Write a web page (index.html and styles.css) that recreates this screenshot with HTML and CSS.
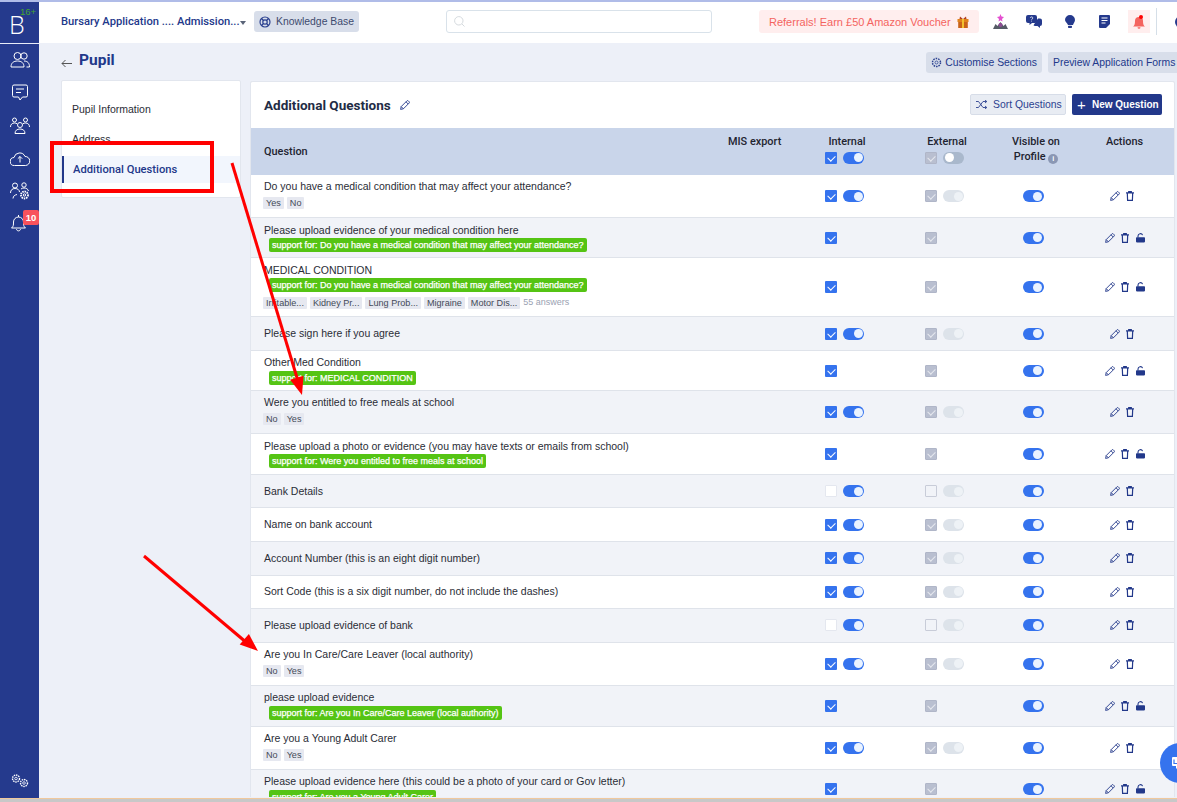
FILE: index.html
```html
<!DOCTYPE html>
<html lang="en">

<head>
    <meta charset="UTF-8">
    <meta name="viewport" content="width=device-width, initial-scale=1.0">
    <title>Additional Questions</title>
    <link rel="stylesheet" href="styles.css">
</head>

<body>
    <!-- shared action icons -->
    <svg class="defs" aria-hidden="true">
        <symbol id="i-pencil" viewBox="0 0 10 10">
            <path d="M.6 9.400l.6-2.800L6.900.9a1 1 0 0 1 1.400 0l.8.8a1 1 0 0 1 0 1.400L3.400 8.800zM1.200 6.600l2.200 2.200M6 1.800l2.200 2.200" fill="none" stroke="currentColor" stroke-width=".9" stroke-linejoin="round" />
        </symbol>
        <symbol id="i-trash" viewBox="0 0 8 10">
            <path d="M0 1.800h8M2.700 1.800V.6h2.600v1.200M1.300 1.800l.3 7.600h4.800l.3-7.600" fill="none" stroke="currentColor" stroke-width="1.200" />
        </symbol>
        <symbol id="i-lock" viewBox="0 0 9 10">
            <path d="M2 4.500V3A2.400 2.400 0 0 1 6.600 2.100" fill="none" stroke="currentColor" stroke-width="1.100" />
            <path d="M.8 4.300h7.400a.8.8 0 0 1 .8.8v3.500a.8.8 0 0 1-.8.8H.8a.8.8 0 0 1-.8-.8V5.100a.8.8 0 0 1 .8-.8z" fill="currentColor" />
        </symbol>
    </svg>

    <div class="app">
        <!-- left rail -->
        <aside class="rail">
            <div class="logo"><span class="logo-b">B</span><span class="logo-age">16+</span></div>
            <nav class="rail-nav">
                <a class="rail-icon">
                    <svg width="20" height="18" viewBox="0 0 20 18" fill="none" stroke="#fff" stroke-width="1">
                        <circle cx="7.500" cy="5" r="3.500" />
                        <circle cx="14" cy="5" r="3.200" />
                        <path d="M1 16c0-4 2.500-6 6.500-6s6.500 2 6.500 6zM14 10c3.500 0 5.500 2 5.500 6h-3" />
                    </svg>
                </a>
                <a class="rail-icon">
                    <svg width="16" height="17" viewBox="0 0 16 17" fill="none" stroke="#fff" stroke-width="1">
                        <path d="M2 1h12a1.500 1.500 0 0 1 1.500 1.500v9A1.500 1.500 0 0 1 14 13h-3.500L8 16l-1.500-3H2A1.500 1.500 0 0 1 .5 11.500v-9A1.500 1.500 0 0 1 2 1z" />
                        <path d="M4 5h8M4 8.500h5" />
                    </svg>
                </a>
                <a class="rail-icon">
                    <svg width="20" height="17" viewBox="0 0 20 17" fill="none" stroke="#fff" stroke-width="1">
                        <circle cx="4.500" cy="3" r="2" />
                        <circle cx="15.500" cy="3" r="2" />
                        <circle cx="10" cy="8" r="2.500" />
                        <path d="M.5 10c0-2.500 1.500-4 4-4 1 0 1.800.2 2.500.8M19.500 10c0-2.500-1.500-4-4-4-1 0-1.800.2-2.500.8M5 16.500c0-3 2-4.500 5-4.500s5 1.500 5 4.500z" />
                    </svg>
                </a>
                <a class="rail-icon">
                    <svg width="20" height="15" viewBox="0 0 20 15" fill="none" stroke="#fff" stroke-width="1">
                        <path d="M5 14.500H4.500A4 4 0 0 1 4 6.500 5.800 5.800 0 0 1 15 5.500a4.500 4.500 0 0 1 .5 9H5z" />
                        <path d="M10 11.500V5.500M7.800 7.700L10 5.500l2.200 2.200" />
                    </svg>
                </a>
                <a class="rail-icon">
                    <svg width="20" height="18" viewBox="0 0 20 18" fill="none" stroke="#fff" stroke-width="1">
                        <circle cx="5" cy="3.500" r="2.500" />
                        <circle cx="14" cy="3" r="2.200" />
                        <path d="M.5 11c0-3 1.800-4.500 4.500-4.500S9.500 8 9.500 10M11 7c.8-.6 1.800-1 3-1 2.200 0 4 1 4.500 3M3 16.500c.3-2.500 1.500-3.500 4-4" />
                        <circle cx="14.500" cy="13" r="3.500" stroke-width="1.800" stroke-dasharray="1.500 .8" />
                        <circle cx="14.500" cy="13" r="1.200" />
                    </svg>
                </a>
                <a class="rail-icon rail-bell">
                    <svg width="15" height="18" viewBox="0 0 15 18" fill="none" stroke="#fff" stroke-width="1">
                        <path d="M.5 14c2-1.500 2-3 2-6a5 5 0 0 1 10 0c0 3 0 4.500 2 6zM5.500 15c.2 2.500 3.800 2.500 4 0M7.500 3V1" />
                    </svg>
                    <span class="rail-badge">10</span>
                </a>
            </nav>
            <a class="rail-gears">
                <svg width="20" height="15" viewBox="0 0 20 15" fill="none" stroke="#fff">
                    <circle cx="6" cy="5.500" r="3.500" stroke-width="1.400" stroke-dasharray="1.500 .8" />
                    <circle cx="6" cy="5.500" r="1.300" stroke-width=".8" />
                    <circle cx="14" cy="10" r="3.500" stroke-width="1.400" stroke-dasharray="1.500 .8" />
                    <circle cx="14" cy="10" r="1.300" stroke-width=".8" />
                </svg>
            </a>
        </aside>

        <div class="page">
            <!-- top bar -->
            <header class="topbar">
                <div class="school"><span>Bursary Application .... Admission...</span><i class="caret"></i></div>
                <a class="kb-btn">
                    <svg width="12" height="12" viewBox="0 0 12 12" fill="none" stroke="#2c4290" stroke-width="1.200">
                        <circle cx="6" cy="6" r="5" />
                        <circle cx="6" cy="6" r="2.200" />
                        <path d="M2.500 2.500l2 2M9.500 2.500l-2 2M2.500 9.500l2-2M9.500 9.500l-2-2" />
                    </svg>
                    Knowledge Base
                </a>
                <div class="search">
                    <svg width="11" height="11" viewBox="0 0 11 11" fill="none" stroke="#d5dade" stroke-width="1">
                        <circle cx="4.800" cy="4.800" r="4.200" />
                        <path d="M8 8l2.500 2.500" />
                    </svg>
                </div>
                <a class="referral">
                    Referrals! Earn £50 Amazon Voucher
                    <svg width="12" height="12" viewBox="0 0 12 12">
                        <rect x=".5" y="3" width="11" height="3" fill="#e0821e" />
                        <rect x="1.200" y="6" width="9.600" height="6" fill="#c9631a" />
                        <rect x="5" y="3" width="2" height="9" fill="#f2c230" />
                        <path d="M6 3L3 .5 2.500 3zM6 3l3-2.500.5 2.500z" fill="#b2401c" />
                    </svg>
                </a>
                <div class="top-icons">
                    <a class="top-icon">
                        <svg width="15" height="15" viewBox="0 0 15 15">
                            <path d="M7.500 0l1 2.500L11 3 9 5l.5 2.500-2-1.200-2 1.200L6 5 4 3l2.500-.5z" fill="#e44fd0" />
                            <path d="M0 15l2.500-5 2 2 3-4 3 4 2-2 2.500 5z" fill="#555b66" />
                            <circle cx="7.500" cy="11" r="2" fill="#8e4d96" />
                        </svg>
                    </a>
                    <a class="top-icon">
                        <svg width="16" height="13" viewBox="0 0 16 13">
                            <path d="M2 0h7a2 2 0 0 1 2 2v4a2 2 0 0 1-2 2H6L3.500 10V8H2a2 2 0 0 1-2-2V2a2 2 0 0 1 2-2z" fill="#253a8d" />
                            <path d="M12 3.500h2a2 2 0 0 1 2 2V9a2 2 0 0 1-2 2v2l-2.500-2H9a2 2 0 0 1-1.500-.8z" fill="#253a8d" />
                            <path d="M4.300 2.800c.3-1.300 2.700-1.100 2.500.3-.1.800-1 .8-1.200 1.600M5.500 5.700v.8" fill="none" stroke="#fff" stroke-width=".8" />
                        </svg>
                    </a>
                    <a class="top-icon">
                        <svg width="10" height="13" viewBox="0 0 10 13">
                            <path d="M5 0a5 5 0 0 1 5 5c0 2-1.500 3-2 5H3C2.500 8 0 7 0 5a5 5 0 0 1 5-5z" fill="#253a8d" />
                            <rect x="3" y="10.800" width="4" height="2.200" rx=".8" fill="#253a8d" />
                        </svg>
                    </a>
                    <a class="top-icon">
                        <svg width="11" height="13" viewBox="0 0 11 13">
                            <path d="M1 0h9a1 1 0 0 1 1 1v8l-4 4H1a1 1 0 0 1-1-1V1a1 1 0 0 1 1-1z" fill="#253a8d" />
                            <path d="M2.500 3h6M2.500 5.500h6M2.500 8h4" stroke="#fff" stroke-width="1.100" />
                        </svg>
                    </a>
                    <a class="top-icon bell-box">
                        <svg width="12" height="14" viewBox="0 0 12 14">
                            <path d="M0 11.500c1.500-1 2-2.500 2-5.500a4 4 0 0 1 8 0c0 3 .5 4.500 2 5.500z" fill="#f4645f" />
                            <path d="M4.500 12.300h3a1.500 1.500 0 0 1-3 0z" fill="#f4645f" />
                            <circle cx="8" cy="2" r="2" fill="#f00" />
                        </svg>
                    </a>
                    <span class="top-sep"></span>
                    <span class="avatar"></span>
                </div>
            </header>

            <main class="content">
                <div class="title-row">
                    <div class="title-left">
                        <svg width="11" height="9" viewBox="0 0 11 9" fill="none" stroke="#555" stroke-width="1">
                            <path d="M11 4.500H1M4.500 1L1 4.500 4.500 8" />
                        </svg>
                        <h1>Pupil</h1>
                    </div>
                    <div class="title-btns">
                        <a class="soft-btn">
                            <svg width="11" height="11" viewBox="0 0 11 11" fill="none" stroke="#2c4290">
                                <circle cx="5.500" cy="5.500" r="4" stroke-width="1.500" stroke-dasharray="1.600 .9" />
                                <circle cx="5.500" cy="5.500" r="1.500" stroke-width=".8" />
                            </svg>
                            Customise Sections
                        </a>
                        <a class="soft-btn preview">Preview Application Forms</a>
                    </div>
                </div>

                <div class="columns">
                    <div class="side-card">
                        <a class="side-link">Pupil Information</a>
                        <a class="side-link">Address</a>
                        <a class="side-link active">Additional Questions</a>
                    </div>

                    <section class="panel">
                        <div class="panel-head">
                            <h2>Additional Questions</h2>
                            <svg class="icon head-pencil"><use href="#i-pencil" /></svg>
                            <a class="sort-btn">
                                <svg width="11" height="9" viewBox="0 0 11 9" fill="none" stroke="#2c4290" stroke-width=".9">
                                    <path d="M0 1.500h2.500l4.500 6h3.500M0 7.500h2.500l4.500-6h3.500M9 0l1.800 1.500L9 3M9 6l1.800 1.500L9 9" />
                                </svg>
                                Sort Questions
                            </a>
                            <a class="new-btn"><span class="plus">+</span>New Question</a>
                        </div>

                        <div class="row head">
                            <div class="q">Question</div>
                            <div class="mis">MIS export</div>
                            <div class="head-col">
                                <span class="head-label">Internal</span>
                                <div class="ctrls"><i class="check"></i><i class="toggle"></i></div>
                            </div>
                            <div class="head-col">
                                <span class="head-label">External</span>
                                <div class="ctrls"><i class="check grey"></i><i class="toggle slate"></i></div>
                            </div>
                            <div class="head-vis">Visible on<br>Profile <i class="info">i</i></div>
                            <div class="head-act">Actions</div>
                        </div>

                        <div class="rows">
                            <div class="row tall">
                                <div class="q">Do you have a medical condition that may affect your attendance?
                                    <div class="tags"><span class="tag">Yes</span><span class="tag">No</span></div>
                                </div>
                                <div></div>
                                <div class="ctrls"><i class="check"></i><i class="toggle"></i></div>
                                <div class="ctrls"><i class="check grey"></i><i class="toggle dim"></i></div>
                                <div class="vis"><i class="toggle"></i></div>
                                <div class="acts plain"><svg class="icon"><use href="#i-pencil" /></svg><svg class="icon trash"><use href="#i-trash" /></svg></div>
                            </div>
                            <div class="row sup">
                                <div class="q">Please upload evidence of your medical condition here
                                    <span class="support">support for: Do you have a medical condition that may affect your attendance?</span>
                                </div>
                                <div></div>
                                <div class="ctrls"><i class="check"></i></div>
                                <div class="ctrls"><i class="check grey"></i></div>
                                <div class="vis"><i class="toggle"></i></div>
                                <div class="acts"><svg class="icon"><use href="#i-pencil" /></svg><svg class="icon trash"><use href="#i-trash" /></svg><svg class="icon lock"><use href="#i-lock" /></svg></div>
                            </div>
                            <div class="row big">
                                <div class="q">MEDICAL CONDITION
                                    <span class="support">support for: Do you have a medical condition that may affect your attendance?</span>
                                    <div class="tags"><span class="tag">Irritable...</span><span class="tag">Kidney Pr...</span><span class="tag">Lung Prob...</span><span class="tag">Migraine</span><span class="tag">Motor Dis...</span><span class="more">55 answers</span></div>
                                </div>
                                <div></div>
                                <div class="ctrls"><i class="check"></i></div>
                                <div class="ctrls"><i class="check grey"></i></div>
                                <div class="vis"><i class="toggle"></i></div>
                                <div class="acts"><svg class="icon"><use href="#i-pencil" /></svg><svg class="icon trash"><use href="#i-trash" /></svg><svg class="icon lock"><use href="#i-lock" /></svg></div>
                            </div>
                            <div class="row">
                                <div class="q">Please sign here if you agree</div>
                                <div></div>
                                <div class="ctrls"><i class="check"></i><i class="toggle"></i></div>
                                <div class="ctrls"><i class="check grey"></i><i class="toggle dim"></i></div>
                                <div class="vis"><i class="toggle"></i></div>
                                <div class="acts plain"><svg class="icon"><use href="#i-pencil" /></svg><svg class="icon trash"><use href="#i-trash" /></svg></div>
                            </div>
                            <div class="row sup">
                                <div class="q">Other Med Condition
                                    <span class="support">support for: MEDICAL CONDITION</span>
                                </div>
                                <div></div>
                                <div class="ctrls"><i class="check"></i></div>
                                <div class="ctrls"><i class="check grey"></i></div>
                                <div class="vis"><i class="toggle"></i></div>
                                <div class="acts"><svg class="icon"><use href="#i-pencil" /></svg><svg class="icon trash"><use href="#i-trash" /></svg><svg class="icon lock"><use href="#i-lock" /></svg></div>
                            </div>
                            <div class="row tall">
                                <div class="q">Were you entitled to free meals at school
                                    <div class="tags"><span class="tag">No</span><span class="tag">Yes</span></div>
                                </div>
                                <div></div>
                                <div class="ctrls"><i class="check"></i><i class="toggle"></i></div>
                                <div class="ctrls"><i class="check grey"></i><i class="toggle dim"></i></div>
                                <div class="vis"><i class="toggle"></i></div>
                                <div class="acts plain"><svg class="icon"><use href="#i-pencil" /></svg><svg class="icon trash"><use href="#i-trash" /></svg></div>
                            </div>
                            <div class="row sup">
                                <div class="q">Please upload a photo or evidence (you may have texts or emails from school)
                                    <span class="support">support for: Were you entitled to free meals at school</span>
                                </div>
                                <div></div>
                                <div class="ctrls"><i class="check"></i></div>
                                <div class="ctrls"><i class="check grey"></i></div>
                                <div class="vis"><i class="toggle"></i></div>
                                <div class="acts"><svg class="icon"><use href="#i-pencil" /></svg><svg class="icon trash"><use href="#i-trash" /></svg><svg class="icon lock"><use href="#i-lock" /></svg></div>
                            </div>
                            <div class="row">
                                <div class="q">Bank Details</div>
                                <div></div>
                                <div class="ctrls"><i class="check blank"></i><i class="toggle"></i></div>
                                <div class="ctrls"><i class="check blank ext"></i><i class="toggle dim"></i></div>
                                <div class="vis"><i class="toggle"></i></div>
                                <div class="acts plain"><svg class="icon"><use href="#i-pencil" /></svg><svg class="icon trash"><use href="#i-trash" /></svg></div>
                            </div>
                            <div class="row">
                                <div class="q">Name on bank account</div>
                                <div></div>
                                <div class="ctrls"><i class="check"></i><i class="toggle"></i></div>
                                <div class="ctrls"><i class="check grey"></i><i class="toggle dim"></i></div>
                                <div class="vis"><i class="toggle"></i></div>
                                <div class="acts plain"><svg class="icon"><use href="#i-pencil" /></svg><svg class="icon trash"><use href="#i-trash" /></svg></div>
                            </div>
                            <div class="row">
                                <div class="q">Account Number (this is an eight digit number)</div>
                                <div></div>
                                <div class="ctrls"><i class="check"></i><i class="toggle"></i></div>
                                <div class="ctrls"><i class="check grey"></i><i class="toggle dim"></i></div>
                                <div class="vis"><i class="toggle"></i></div>
                                <div class="acts plain"><svg class="icon"><use href="#i-pencil" /></svg><svg class="icon trash"><use href="#i-trash" /></svg></div>
                            </div>
                            <div class="row">
                                <div class="q">Sort Code (this is a six digit number, do not include the dashes)</div>
                                <div></div>
                                <div class="ctrls"><i class="check"></i><i class="toggle"></i></div>
                                <div class="ctrls"><i class="check grey"></i><i class="toggle dim"></i></div>
                                <div class="vis"><i class="toggle"></i></div>
                                <div class="acts plain"><svg class="icon"><use href="#i-pencil" /></svg><svg class="icon trash"><use href="#i-trash" /></svg></div>
                            </div>
                            <div class="row">
                                <div class="q">Please upload evidence of bank</div>
                                <div></div>
                                <div class="ctrls"><i class="check blank"></i><i class="toggle"></i></div>
                                <div class="ctrls"><i class="check blank ext"></i><i class="toggle dim"></i></div>
                                <div class="vis"><i class="toggle"></i></div>
                                <div class="acts plain"><svg class="icon"><use href="#i-pencil" /></svg><svg class="icon trash"><use href="#i-trash" /></svg></div>
                            </div>
                            <div class="row tall">
                                <div class="q">Are you In Care/Care Leaver (local authority)
                                    <div class="tags"><span class="tag">No</span><span class="tag">Yes</span></div>
                                </div>
                                <div></div>
                                <div class="ctrls"><i class="check"></i><i class="toggle"></i></div>
                                <div class="ctrls"><i class="check grey"></i><i class="toggle dim"></i></div>
                                <div class="vis"><i class="toggle"></i></div>
                                <div class="acts plain"><svg class="icon"><use href="#i-pencil" /></svg><svg class="icon trash"><use href="#i-trash" /></svg></div>
                            </div>
                            <div class="row sup loose">
                                <div class="q">please upload evidence
                                    <span class="support">support for: Are you In Care/Care Leaver (local authority)</span>
                                </div>
                                <div></div>
                                <div class="ctrls"><i class="check"></i></div>
                                <div class="ctrls"><i class="check grey"></i></div>
                                <div class="vis"><i class="toggle"></i></div>
                                <div class="acts"><svg class="icon"><use href="#i-pencil" /></svg><svg class="icon trash"><use href="#i-trash" /></svg><svg class="icon lock"><use href="#i-lock" /></svg></div>
                            </div>
                            <div class="row tall">
                                <div class="q">Are you a Young Adult Carer
                                    <div class="tags"><span class="tag">No</span><span class="tag">Yes</span></div>
                                </div>
                                <div></div>
                                <div class="ctrls"><i class="check"></i><i class="toggle"></i></div>
                                <div class="ctrls"><i class="check grey"></i><i class="toggle dim"></i></div>
                                <div class="vis"><i class="toggle"></i></div>
                                <div class="acts plain"><svg class="icon"><use href="#i-pencil" /></svg><svg class="icon trash"><use href="#i-trash" /></svg></div>
                            </div>
                            <div class="row sup">
                                <div class="q">Please upload evidence here (this could be a photo of your card or Gov letter)
                                    <span class="support">support for: Are you a Young Adult Carer</span>
                                </div>
                                <div></div>
                                <div class="ctrls"><i class="check"></i></div>
                                <div class="ctrls"><i class="check grey"></i></div>
                                <div class="vis"><i class="toggle"></i></div>
                                <div class="acts"><svg class="icon"><use href="#i-pencil" /></svg><svg class="icon trash"><use href="#i-trash" /></svg><svg class="icon lock"><use href="#i-lock" /></svg></div>
                            </div>
                        </div>
                    </section>
                </div>
            </main>
        </div>
    </div>
    <div class="strip"></div>

    <!-- floating chat button -->
    <a class="chat-fab">
        <svg width="12" height="12" viewBox="0 0 12 12">
            <path d="M1 0h10a1 1 0 0 1 1 1v7a1 1 0 0 1-1 1H7l-3 3V9H1a1 1 0 0 1-1-1V1a1 1 0 0 1 1-1z" fill="#fff" />
            <path d="M2 2.500v4h3" fill="none" stroke="#3573ee" stroke-width="1.200" />
        </svg>
    </a>

    <!-- red markup drawn over the screenshot -->
    <svg class="markup" width="1177" height="802" viewBox="0 0 1177 802" fill="none" stroke="#f00">
        <rect x="52" y="143" width="160" height="48" stroke-width="4" />
        <path d="M232 163L298 381" stroke-width="3" />
        <path d="M302 395L303.500 375.800 290.100 379.800z" fill="#f00" stroke="none" />
        <path d="M144 556L247 643" stroke-width="3" />
        <path d="M258 651L248.900 634 239.700 644.600z" fill="#f00" stroke="none" />
    </svg>
</body>

</html>
```

FILE: styles.css
```css
* {
    box-sizing: border-box;
}

html,
body {
    margin: 0;
    height: 100%;
}

body {
    display: flex;
    flex-direction: column;
    position: relative;
    overflow: hidden;
    border-top: 2px solid #b0bce8;
    background-color: #edf0f8;
    font-family: "Liberation Sans", Arial, sans-serif;
    font-size: 10.5px;
    color: #2a2d36;
}

a {
    color: inherit;
    text-decoration: none;
}

.defs {
    display: none;
}

.app {
    flex: 1;
    min-height: 0;
    display: flex;
}

.strip {
    height: 4px;
    border-top: 1px solid #f0c89c;
    background-color: #c8c8c8;
}

/* left rail */
.rail {
    width: 39px;
    flex: none;
    display: flex;
    flex-direction: column;
    align-items: center;
    background-color: #253a8d;
}

.logo {
    width: 100%;
    height: 42px;
    flex: none;
    position: relative;
    border-bottom: 1px solid #e8ecf8;
}

.logo-b {
    display: block;
    padding: 8px 0 0 9px;
    font-family: "Open Sans", sans-serif;
    font-size: 25px;
    font-weight: 300;
    line-height: 28px;
    color: #fff;
}

.logo-age {
    position: absolute;
    top: 4px;
    left: 20px;
    font-size: 9.5px;
    line-height: 11px;
    color: #43a62e;
}

.rail-nav {
    display: flex;
    flex-direction: column;
    align-items: center;
    width: 100%;
}

.rail-icon {
    height: 32.6px;
    display: flex;
    align-items: center;
    justify-content: center;
    position: relative;
    width: 100%;
}

.rail-bell {
    padding-right: 3px;
}

.rail-badge {
    position: absolute;
    top: 3px;
    right: 0;
    width: 16px;
    height: 15px;
    border-radius: 2px;
    background-color: #f8525c;
    color: #fff;
    font-size: 9.5px;
    font-weight: bold;
    line-height: 15px;
    text-align: center;
}

.rail-gears {
    margin-top: auto;
    margin-bottom: 10px;
    display: flex;
}

/* top bar */
.page {
    flex: 1;
    min-width: 0;
    display: flex;
    flex-direction: column;
}

.topbar {
    height: 41px;
    flex: none;
    display: flex;
    align-items: center;
    padding: 0 0 2px 22px;
    background-color: #fff;
}

.school {
    width: 193px;
    flex: none;
    display: flex;
    align-items: center;
    color: #22388a;
    font-family: Roboto, sans-serif;
    font-weight: 500;
    font-size: 11.2px;
    white-space: nowrap;
}

.caret {
    margin-top: 2px;
    border: 3.5px solid transparent;
    border-top: 4px solid #5a6478;
    border-bottom: 0;
}

.kb-btn {
    width: 105px;
    height: 21px;
    flex: none;
    display: flex;
    align-items: center;
    gap: 5px;
    padding-left: 5px;
    border-radius: 3px;
    background-color: #d8deea;
    color: #3d4a6e;
    font-size: 10.4px;
}

.search {
    width: 266px;
    height: 23px;
    flex: none;
    display: flex;
    align-items: center;
    margin-left: 87px;
    padding-left: 7px;
    border: 1px solid #d9e2ea;
    border-radius: 3px;
}

.referral {
    width: 220px;
    height: 23px;
    flex: none;
    display: flex;
    align-items: center;
    gap: 6px;
    margin-left: 47px;
    padding-left: 10px;
    border-radius: 3px;
    background-color: #ffeeee;
    color: #f4645f;
    font-size: 11px;
    white-space: nowrap;
}

.top-icons {
    display: flex;
    align-items: center;
    margin-left: 14px;
}

.top-icon {
    display: flex;
    align-items: center;
    justify-content: center;
}

.top-icon:nth-child(1) {
    margin-right: 18px;
}

.top-icon:nth-child(2) {
    margin-right: 23px;
}

.top-icon:nth-child(3) {
    margin-right: 24px;
}

.top-icon:nth-child(4) {
    margin-right: 18px;
}

.bell-box {
    width: 22px;
    height: 23px;
    background-color: #ffeeee;
}

.top-sep {
    width: 1px;
    height: 27px;
    margin-left: 6px;
    background-color: #d5dfe8;
}

.avatar {
    width: 12px;
    height: 12px;
    flex: none;
    margin-left: 18px;
    border-radius: 50%;
    background-color: #253a8d;
}

/* page title */
.content {
    flex: 1;
    min-height: 0;
    display: flex;
    flex-direction: column;
    overflow: hidden;
    padding: 0 2px 2px 22px;
}

.title-row {
    height: 37px;
    flex: none;
    display: flex;
    align-items: center;
    justify-content: space-between;
}

.title-left {
    display: flex;
    align-items: center;
    gap: 7px;
    padding-bottom: 3px;
}

.title-left svg {
    margin-top: 6px;
}

h1 {
    margin: 0;
    color: #22388a;
    font-family: Roboto, sans-serif;
    font-size: 15.5px;
    font-weight: 700;
}

.title-btns {
    display: flex;
    gap: 6px;
    margin-right: -4px;
    margin-top: 1px;
}

.soft-btn {
    height: 21px;
    display: flex;
    align-items: center;
    gap: 3px;
    padding: 0 5px;
    border-radius: 3px;
    background-color: #d8deea;
    color: #22388a;
    font-size: 10.4px;
    white-space: nowrap;
}

.preview {
    width: 131px;
}

/* two columns */
.columns {
    flex: 1;
    min-height: 0;
    display: flex;
    gap: 10px;
    align-items: flex-start;
}

.side-card {
    width: 180px;
    height: 118px;
    flex: none;
    padding-top: 13px;
    border: 1px solid #e2e6ee;
    border-radius: 2px;
    background-color: #fff;
}

.side-link {
    display: block;
    height: 30px;
    padding-left: 10px;
    line-height: 30px;
    color: #2a2d36;
}

.side-link.active {
    height: 27px;
    margin-top: 2px;
    padding-left: 9px;
    border-left: 2px solid #22388a;
    background-color: #f2f6fd;
    line-height: 27px;
    color: #22388a;
    font-family: Roboto, sans-serif;
    font-size: 11.2px;
    font-weight: 500;
}

.panel {
    width: 923px;
    height: 100%;
    flex: none;
    margin-top: 1px;
    overflow: hidden;
    border-top: 1px solid #e2e6ee;
    border-radius: 2px 2px 0 0;
    box-shadow: -1px 0 0 #e2e6ee, 1px 0 0 #e2e6ee;
    background-color: #fff;
}

.panel-head {
    height: 46px;
    display: flex;
    align-items: center;
    padding: 0 12px 1px 13px;
}

h2 {
    margin: 0;
    color: #222c45;
    font-family: Roboto, sans-serif;
    font-size: 13.5px;
    font-weight: 700;
}

.icon {
    width: 10px;
    height: 10px;
    flex: none;
    color: #22388a;
}

.head-pencil {
    margin-left: 9px;
    margin-right: auto;
}

.sort-btn {
    width: 96px;
    height: 21px;
    display: flex;
    align-items: center;
    gap: 6px;
    padding-left: 5px;
    border: 1px solid #d7dde8;
    border-radius: 2px;
    background-color: #e8ecf3;
    color: #2c4290;
    font-size: 10.4px;
}

.new-btn {
    width: 90px;
    height: 21px;
    display: flex;
    align-items: center;
    margin-left: 6px;
    padding-left: 5px;
    border-radius: 2px;
    background-color: #22388a;
    color: #fff;
    font-size: 10px;
    font-weight: bold;
}

.plus {
    width: 15px;
    font-size: 15px;
    font-weight: normal;
    line-height: 15px;
}

/* question table */
.row {
    display: grid;
    grid-template-columns: 466px 98px 100px 88px 66px 105px;
    align-items: center;
    min-height: 33.6px;
    border-bottom: 1px solid #dfe3ea;
}

.rows .row:nth-child(even) {
    background-color: #f1f3f8;
}

.row.tall {
    height: 43px;
}

.row.sup {
    height: 40.4px;
}

.row.sup.loose {
    height: 41px;
}

.row.big {
    height: 59px;
}

.q {
    padding-left: 13px;
    line-height: 13px;
}

.row.tall .q {
    align-self: start;
    padding-top: 5px;
}

.row.sup .q,
.row.big .q {
    align-self: start;
    padding-top: 5.5px;
}

.row.head {
    height: 47px;
    align-items: start;
    border-bottom: 0;
    background-color: #c9d5ea;
    font-family: Roboto, sans-serif;
    font-size: 10.9px;
    font-weight: 500;
    color: #1f2430;
}

.row.head .q {
    align-self: center;
}

.mis,
.head-col,
.head-vis,
.head-act {
    padding-top: 7px;
    line-height: 14.5px;
}

.mis {
    padding-left: 11px;
}

.head-col {
    padding-left: 10px;
}

.head-label {
    display: block;
    width: 44px;
    text-align: center;
}

.head-col .ctrls {
    padding-left: 0;
    margin-top: 2px;
}

.head-vis {
    text-align: center;
}

.head-act {
    padding-left: 6px;
    text-align: center;
}

.info {
    display: inline-block;
    width: 10px;
    height: 10px;
    border-radius: 50%;
    background-color: #8a97b4;
    color: #fff;
    font-size: 8px;
    line-height: 10px;
    font-style: normal;
    text-align: center;
    vertical-align: -1px;
}

.ctrls {
    display: flex;
    align-items: center;
    gap: 6px;
    padding-left: 10px;
}

.vis {
    display: flex;
    justify-content: center;
    padding-right: 6px;
}

.acts {
    display: flex;
    align-items: center;
    justify-content: center;
    gap: 6px;
    padding-left: 6px;
}

.acts.plain {
    padding-right: 5px;
}

.trash {
    width: 8px;
    height: 10px;
}

.lock {
    width: 9px;
    height: 10px;
    margin-left: 1px;
}

/* checkbox and switch */
.check {
    width: 12px;
    height: 12px;
    flex: none;
    position: relative;
    display: block;
    border-radius: 1px;
    background-color: #3573ee;
}

.check::after {
    content: "";
    position: absolute;
    left: 4px;
    top: 2px;
    width: 4px;
    height: 6px;
    border: solid #fff;
    border-width: 0 1.5px 1.5px 0;
    transform: rotate(45deg);
}

.check.grey {
    border: 1px solid #b0b6c8;
    background-color: #b9bfd0;
}

.check.grey::after {
    left: 3px;
    top: 1px;
    border-color: #e6e8ee;
}

.check.blank {
    border: 1px solid #e4e7ef;
    background-color: #fff;
}

.check.blank.ext {
    border-color: #c8ccd8;
    background-color: transparent;
}

.check.blank::after {
    display: none;
}

.toggle {
    width: 21px;
    height: 12px;
    flex: none;
    position: relative;
    display: block;
    border-radius: 6px;
    background-color: #3573ee;
}

.toggle::after {
    content: "";
    position: absolute;
    right: 1.5px;
    top: 1.5px;
    width: 9px;
    height: 9px;
    border-radius: 50%;
    background-color: #eaf3ff;
}

.toggle.dim {
    background-color: #dde3ea;
}

.toggle.dim::after {
    background-color: #eef2f6;
}

.toggle.slate {
    background-color: #a9b8cc;
}

.toggle.slate::after {
    right: auto;
    left: 1.5px;
    background-color: #fff;
}

/* tags */
.tags {
    display: flex;
    align-items: center;
    gap: 3px;
    margin: 4px 0 0 -1px;
}

.tag {
    height: 12px;
    padding: 0 3px;
    border-radius: 1px;
    background-color: #e6e8f0;
    color: #444a58;
    font-size: 9.1px;
    line-height: 12px;
}

.more {
    color: #9aa2b2;
    font-size: 9px;
}

.support {
    display: table;
    height: 14px;
    margin: 1.5px 0 0 5px;
    padding: 0 3px;
    border-radius: 2px;
    background-color: #55c414;
    color: #fff;
    font-size: 9px;
    line-height: 14px;
    -webkit-text-stroke: .25px #fff;
}

/* overlay bits */
.chat-fab {
    position: absolute;
    left: 1160px;
    top: 741px;
    width: 40px;
    height: 40px;
    display: flex;
    align-items: center;
    padding-left: 12px;
    border-radius: 50%;
    background-color: #3573ee;
}

.markup {
    position: absolute;
    left: 0;
    top: -2px;
    pointer-events: none;
}
```
